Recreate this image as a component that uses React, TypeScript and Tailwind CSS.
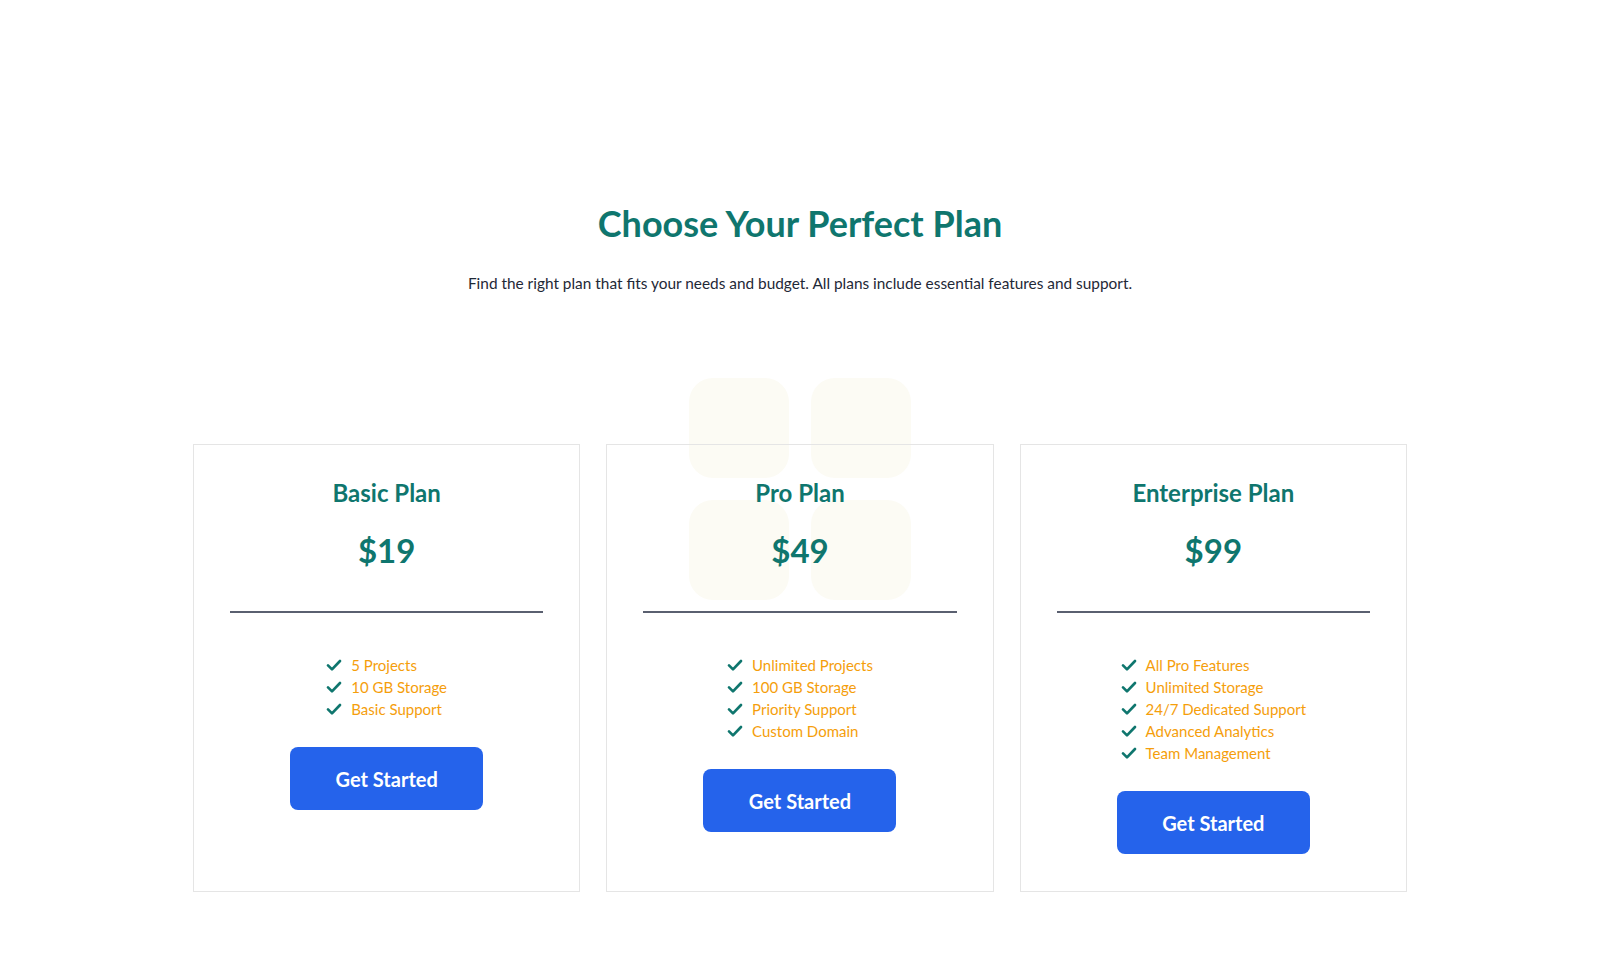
import React from 'react';

interface Plan {
  name: string;
  price: string;
  features: string[];
}

const PLANS: Plan[] = [
  { name: 'Basic Plan', price: '$19', features: ['5 Projects', '10 GB Storage', 'Basic Support'] },
  {
    name: 'Pro Plan',
    price: '$49',
    features: ['Unlimited Projects', '100 GB Storage', 'Priority Support', 'Custom Domain'],
  },
  {
    name: 'Enterprise Plan',
    price: '$99',
    features: [
      'All Pro Features',
      'Unlimited Storage',
      '24/7 Dedicated Support',
      'Advanced Analytics',
      'Team Management',
    ],
  },
];

const Check = () => (
  <svg width="16" height="16" viewBox="0 0 24 24" fill="none" className="shrink-0">
    <path d="M3 12.5l6 6L21 6" stroke="#0f766e" strokeWidth="4" strokeLinecap="round" strokeLinejoin="round" />
  </svg>
);

const PlanCard: React.FC<{ plan: Plan }> = ({ plan }) => (
  <div className="flex flex-col items-center border border-[#e5e5e5] px-9 pt-8 pb-[37px]">
    <h3 className="text-2xl font-bold leading-8 text-[#0f766e]">{plan.name}</h3>
    <div className="mt-[21px] text-[33px] font-bold leading-10 text-[#0f766e]">{plan.price}</div>
    <div className="mt-[41px] h-[2px] w-full bg-[#5a6070]" />
    <ul className="mt-[41px] flex flex-col">
      {plan.features.map((f) => (
        <li key={f} className="flex items-center gap-[9px] text-[15px] leading-[22px] text-[#f59e0b]">
          <Check />
          <span>{f}</span>
        </li>
      ))}
    </ul>
    <button
      type="button"
      className="mt-[27px] h-[63px] w-[193px] rounded-lg bg-[#2563eb] text-xl font-bold text-white"
    >
      Get Started
    </button>
  </div>
);

export default function App() {
  return (
    <div className="min-h-screen bg-white" style={{ fontFamily: 'Lato, "Noto Sans", sans-serif' }}>
      <div className="mx-auto w-[1214px] pt-[203px] pb-20">
        <h1 className="text-center text-4xl font-bold leading-10 text-[#0f766e]">Choose Your Perfect Plan</h1>
        <p className="mt-7 text-center text-[15.4px] leading-6 text-[#1f2937]">
          Find the right plan that fits your needs and budget. All plans include essential features and support.
        </p>

        <div className="relative mt-[149px]">
          <div className="absolute left-1/2 -top-[66px] grid -translate-x-1/2 grid-cols-2 gap-[22px]">
            <div className="h-[100px] w-[100px] rounded-3xl bg-[#fcfbf4]" />
            <div className="h-[100px] w-[100px] rounded-3xl bg-[#fcfbf4]" />
            <div className="h-[100px] w-[100px] rounded-3xl bg-[#fcfbf4]" />
            <div className="h-[100px] w-[100px] rounded-3xl bg-[#fcfbf4]" />
          </div>
          <div className="relative grid grid-cols-3 gap-[26px]">
            {PLANS.map((p) => (
              <PlanCard key={p.name} plan={p} />
            ))}
          </div>
        </div>
      </div>
    </div>
  );
}
